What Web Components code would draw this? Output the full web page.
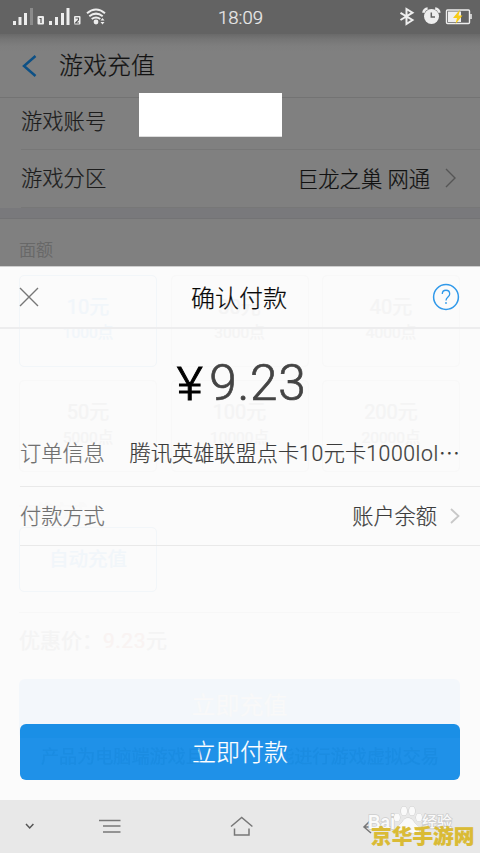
<!DOCTYPE html>
<html lang="zh-CN">
<head>
<meta charset="utf-8">
<title>确认付款</title>
<style>
body{margin:0;width:480px;height:853px;overflow:hidden;font-family:Roboto,"Noto Sans CJK SC",sans-serif;font-weight:300;-webkit-text-stroke:.22px currentColor}
</style>
</head>
<body>
<pay-screen></pay-screen>
<script>
const define = (name, html) => {
  const t = document.createElement('template');
  t.innerHTML = html;
  customElements.define(name, class extends HTMLElement {
    constructor() {
      super();
      this.attachShadow({mode: 'open'}).append(t.content.cloneNode(true));
    }
  });
};

define('status-bar', `
<style>
:host{display:flex;box-sizing:border-box;height:34px;background:#636363;color:#e9e9e9;align-items:center;position:relative}
svg{display:block}
.l{width:218px}.t{width:180px;font-size:18.5px;line-height:34px;padding-top:1px;font-weight:300}
</style>
<svg class="l" width="218" height="34" viewBox="0 0 218 34" fill="#ededed">
<rect x="13" y="21" width="3" height="4"/><rect x="18.500" y="17" width="3" height="8"/><rect x="24" y="13" width="3" height="12"/><rect x="30" y="8" width="3" height="17" fill="#8b8b8b"/>
<rect x="37.500" y="16" width="6.500" height="8.500" rx="1"/><path d="M39.500 18.500h1.500v4.500" fill="none" stroke="#555" stroke-width="1.200"/>
<rect x="49" y="21" width="3" height="4"/><rect x="55" y="17" width="3" height="8"/><rect x="61" y="13" width="3" height="12"/><rect x="66.500" y="8" width="3" height="17"/>
<rect x="74" y="16" width="6.500" height="8.500" rx="1"/><path d="M75.500 18h3v2l-3 3h3.500" fill="none" stroke="#555" stroke-width="1.100"/>
<g fill="none" stroke="#ededed" stroke-width="2"><path d="M87 13.300q9-7.500 18 0M89.300 16.300q6.700-5.400 13.400 0M91.700 19q4.300-3.200 8.600 0"/></g><circle cx="96" cy="22" r="2.400"/><path d="M100.500 20.500l2-2.500 2 2.500zM100.500 22l2 2.500 2-2.500z"/>
</svg>
<div class="t">18:09</div>
<svg width="82" height="34" viewBox="0 0 82 34" fill="none" stroke="#eee" stroke-width="2">
<path d="M2.500 12.800l12 7.200-6 4V9l6 3.700-12 7.300"/>
<circle cx="33.500" cy="16.500" r="7.500" fill="#eee" stroke="none"/><path d="M25.600 12.700a4 4 0 0 1 4-4M37.200 8.700a4 4 0 0 1 4 4" stroke-width="2.800"/><path d="M33.300 12.500v4.500h3.700" stroke="#636363" stroke-width="1.500"/>
<rect x="48.500" y="10" width="23" height="13.500" rx="1" stroke-width="1.400"/><rect x="50" y="11.500" width="13" height="10.500" fill="#eee" stroke="none"/><path d="M73 14v5" stroke-width="1.500"/><path d="M62 9.500l-7 8.500h4l-1.500 6 7-8.500h-4z" fill="#f7cc18" stroke="none"/>
</svg>`);

define('title-bar', `
<style>
:host{display:flex;box-sizing:border-box;height:64px;padding-left:22px;align-items:center;gap:22px;border-bottom:1px solid #737373;background:linear-gradient(#696969,#757575 5px,#7e7e7e 12px,#808080 18px);font-size:24px;line-height:36px;color:#121212}
svg{display:block;width:15px}
.t{padding-top:1px}
</style>
<svg height="24" viewBox="0 0 15 24" fill="none" stroke="#0d5085" stroke-width="2.500"><path d="M13.500 2L2 12l11.500 10"/></svg><div class="t"><slot></slot></div>`);

define('dim-row', `
<style>
:host{display:flex;box-sizing:border-box;margin-left:21px;padding-right:24px;align-items:center;justify-content:space-between;border-bottom:1px solid #777;font-size:21.3px;line-height:32px;color:#1c1c1c}
.v{display:flex;align-items:center;gap:15px;color:#111;padding-top:3px}
::slotted(svg){display:block;margin-top:-5px}
</style><slot></slot><div class="v"><slot name="value"></slot></div>`);

define('face-card', `
<style>
:host{display:flex;box-sizing:border-box;height:92px;flex-direction:column;align-items:center;border:1px solid #f8f8f8;border-radius:5px;color:#f4f4f4;font-size:20px;line-height:26px;padding-top:18px;font-weight:400}
:host([on]){border-color:#f2f6f9;color:#f1f6fa}
small{font-size:15.500px;line-height:24px;margin-top:1px}
</style><slot></slot><small><slot name="points"></slot></small>`);

define('recharge-page', `
<style>
:host{display:block;background:#808080}
.band{height:11px;box-sizing:border-box;background:#79797c;border-bottom:1px solid #737375}
.face{box-sizing:border-box;height:47px;padding:19px 0 0 19px;font-size:17px;line-height:24px;color:#666}
.ghost{box-sizing:border-box;height:534px;background:#fbfbfb;border-top:1px solid #cfcfcf;padding:8px 20px 0 19px;font-weight:400}
.grid{display:grid;grid-template-columns:repeat(3,138px);justify-content:space-between;row-gap:13px}
.mode{height:28px;padding-top:27px;font-size:17px;line-height:24px;color:#f9f9f9}
.auto{box-sizing:border-box;width:138px;height:65px;border:1px solid #f2f6f9;border-radius:5px;color:#f1f6fa;font-size:19.500px;line-height:63px;text-align:center}
.price{border-top:1px solid #f7f7f7;margin-top:20px;height:66px;line-height:57px;font-size:21px;color:#f4f4f4}
.price b{font-weight:400;color:#f9f3f2;letter-spacing:.5px}
.btn{height:60px;border-radius:6px;background:#f3f7fb;color:#f9f9f9;text-align:center;font-size:24px;line-height:54px}
.box{position:absolute;left:139px;top:93px;width:143px;height:43px;background:#fff;border-bottom:1px solid #ddd}
</style>
<title-bar>游戏充值</title-bar>
<dim-row style="height:52px;padding-bottom:3px">游戏账号</dim-row>
<dim-row style="height:58px">游戏分区<span slot="value">巨龙之巢 网通</span><svg slot="value" width="11" height="20" viewBox="0 0 11 20" fill="none" stroke="#555" stroke-width="1.400"><path d="M1 1l9 9-9 9"/></svg></dim-row>
<div class="band"></div>
<div class="face">面额</div>
<div class="ghost">
<div class="grid">
<face-card on>10元<span slot="points">1000点</span></face-card><face-card>30元<span slot="points">3000点</span></face-card><face-card>40元<span slot="points">4000点</span></face-card>
<face-card>50元<span slot="points">5000点</span></face-card><face-card>100元<span slot="points">10000点</span></face-card><face-card>200元<span slot="points">20000点</span></face-card>
</div>
<div class="mode">充值方式</div><div class="auto">自动充值</div>
<div class="price">优惠价：<b>9.23</b>元</div><div class="btn">立即充值</div>
</div>
<div class="box"></div>`);

define('sheet-header', `
<style>
:host{display:grid;grid-template-columns:28px 1fr 28px;box-sizing:border-box;height:62px;padding:0 20px 0 18px;align-items:center;border-bottom:2px solid #ededee;font-size:24px;line-height:36px;text-align:center;color:#080808}
svg{display:block}
div{padding-top:3px}
</style>
<svg width="22" height="22" viewBox="0 0 22 22" stroke="#777" stroke-width="1.400"><path d="M2 2l18 18M20 2L2 20"/></svg>
<div><slot></slot></div>
<svg width="28" height="28" viewBox="0 0 28 28" fill="none" stroke="#3099ea" stroke-width="1.500"><circle cx="14" cy="14" r="12.400"/><path d="M10.300 11c0-5 7.400-5 7.400 0 0 3-3.700 3-3.700 6.500M14 19v2" stroke-width="1.300"/></svg>`);

define('pay-row', `
<style>
:host{display:flex;box-sizing:border-box;height:59px;margin-left:20px;padding-right:20px;align-items:center;justify-content:space-between;border-bottom:1px solid #e9e9e9;font-size:21.2px;line-height:32px;color:#707070;white-space:nowrap}
.v{display:flex;align-items:center;color:#3b3b3b}
.k,.v{padding-top:2px}
::slotted(svg){display:block;margin-left:13px;margin-top:-2px}
</style><div class="k"><slot></slot></div><div class="v"><slot name="value"></slot></div>`);

define('pay-button', `
<style>
:host{display:grid;height:56px;border-radius:6px;background:linear-gradient(#1a8fe6 14px,#1f91e8 14px);color:#fff;font-size:24px;line-height:56px;text-align:center;overflow:hidden}
.m{grid-area:1/1;padding-top:1px}.note{grid-area:1/1;font-size:18.100px;font-weight:400;line-height:66px;color:#1b8ce1;white-space:nowrap;-webkit-mask-image:linear-gradient(90deg,#000 175px,transparent 185px,transparent 264px,#000 272px)}
</style><div class="note">产品为电脑端游戏且手机端不能进行游戏虚拟交易</div><div class="m"><slot></slot></div>`);

define('pay-sheet', `
<style>
:host{display:flex;flex-direction:column;position:absolute;left:0;top:267px;width:480px;height:533px}
.amt{display:flex;box-sizing:border-box;height:91px;padding-top:24px;justify-content:center;align-items:baseline;gap:7px;color:#444;font-size:49.500px;line-height:60px;padding-left:5px}
.amt span{letter-spacing:.8px;-webkit-text-stroke:.7px #444}
.amt i{font-style:normal;color:#000;font-size:46px;transform:scaleX(1.1);-webkit-text-stroke:.9px #000;margin-top:-2px}
pay-button{margin:178px 20px 0}
</style>
<sheet-header>确认付款</sheet-header>
<div class="amt"><i>¥</i><span>9.23</span></div>
<pay-row style="height:67px">订单信息<span slot="value">腾讯英雄联盟点卡<span style="letter-spacing:.6px">10</span>元卡<span style="letter-spacing:.6px">1000lol</span>⋯</span></pay-row>
<pay-row>付款方式<span slot="value">账户余额</span><svg slot="value" width="10" height="16" viewBox="0 0 10 16" fill="none" stroke="#c8c8c8" stroke-width="1.800"><path d="M1 1l7.500 7L1 15"/></svg></pay-row>
<pay-button>立即付款</pay-button>`);

define('nav-bar', `
<style>
:host{display:block;height:53px;background:#e8e8e8}
svg{display:block}
.bd{position:absolute;left:367px;top:803px}
.site{position:absolute;left:371px;top:820px;font:900 20.700px/30px "Noto Sans CJK SC",sans-serif;color:#dabb35;white-space:nowrap}
</style>
<svg width="480" height="53" viewBox="0 0 480 53" fill="none" stroke="#777" stroke-width="1.500">
<path d="M26 24l3.700 4 3.700-4" stroke="#555"/><path d="M99 20.500h21.500M103 26h17.500M103 32h17.500"/>
<path d="M231 26.500l10.700-9 10.700 9M234.500 28.500v6.500h14.500v-6.500"/><path d="M370 21l-6 6 7 6M364 27h20"/></svg>
<svg class="bd" width="92" height="36" viewBox="0 0 92 36" fill="#fafafa" stroke="#cdcdcd" stroke-width="1.600" paint-order="stroke">
<text x="1" y="26" font-family="Liberation Sans" font-weight="700" font-size="20" textLength="27" lengthAdjust="spacingAndGlyphs">Bai</text><text x="55" y="24" font-family="Noto Sans CJK SC" font-weight="500" font-size="15">经验</text>
<g stroke-width="1"><ellipse cx="30" cy="14.500" rx="3" ry="4"/><ellipse cx="37" cy="8" rx="3" ry="4.500"/><ellipse cx="45" cy="8" rx="3" ry="4.500"/><ellipse cx="52" cy="14.500" rx="3" ry="4"/><path d="M41 15c-5 0-5 5-9 7-6 5-1 10 4 8 4-1 6-1 10 0 6 2 9-4 4-8-4-3-4-7-9-7z"/></g>
</svg>
<div class="site">京华手游网</div>`);

define('pay-screen', `
<style>:host{display:block;position:relative;width:480px;height:853px;overflow:hidden}</style>
<status-bar></status-bar><recharge-page></recharge-page><nav-bar></nav-bar><pay-sheet></pay-sheet>`);
</script>
</body>
</html>
